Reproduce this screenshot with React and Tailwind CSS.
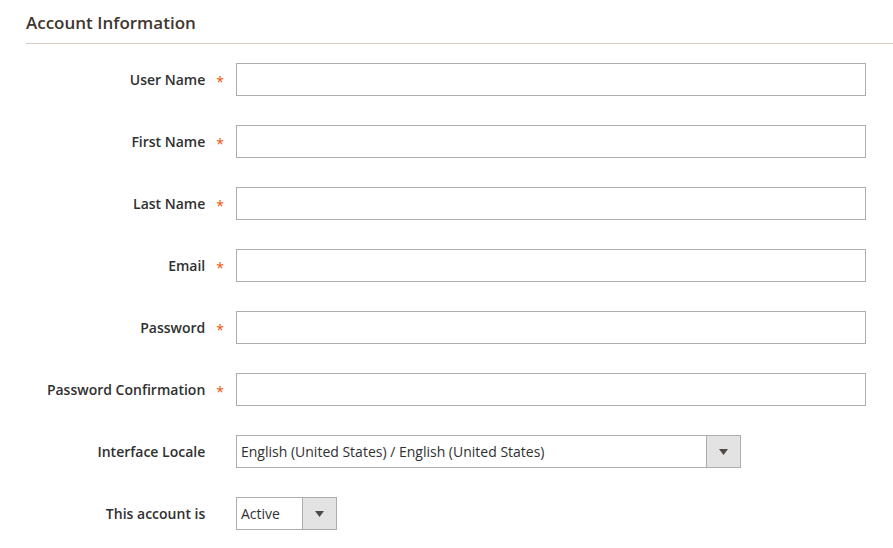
const fields = [
  "User Name",
  "First Name",
  "Last Name",
  "Email",
  "Password",
  "Password Confirmation",
];

const Label = ({ text, required }) => (
  <div className="w-[236px] shrink-0 flex items-center justify-end pr-[12px] text-[14px] font-semibold text-[#303030]">
    <span>{text}</span>
    <span
      className={`ml-[11px] font-normal text-[14px] mt-[3px] ${
        required ? "text-[#eb5202]" : "invisible"
      }`}
    >
      *
    </span>
  </div>
);

const Arrow = () => (
  <svg width="9" height="6" viewBox="0 0 9 6">
    <path d="M0 0 L9 0 L4.5 6 Z" fill="#514943" />
  </svg>
);

const SelectBox = ({ value, width }) => (
  <div
    className={`${width} h-[33px] border border-[#adadad] flex items-stretch bg-white`}
  >
    <div className="flex-1 flex items-center pl-[4px] text-[14px] text-[#303030]">
      {value}
    </div>
    <div className="w-[34px] bg-[#e3e3e3] border-l border-[#adadad] flex items-center justify-center">
      <Arrow />
    </div>
  </div>
);

export default function App() {
  return (
    <div
      className="w-[893px] h-[548px] bg-white overflow-hidden"
      style={{ fontFamily: '"Open Sans", "Liberation Sans", sans-serif' }}
    >
      <div className="ml-[26px] pt-[11px] pb-[9px] border-b border-[#d6cdbd]">
        <h2 className="text-[17px] leading-[23px] font-semibold text-[#41362f]">
          Account Information
        </h2>
      </div>

      <div className="pt-[19px] flex flex-col gap-[29px]">
        {fields.map((f) => (
          <div key={f} className="flex items-center">
            <Label text={f} required />
            <div className="w-[630px] h-[33px] border border-[#adadad] bg-white" />
          </div>
        ))}
        <div className="flex items-center">
          <Label text="Interface Locale" />
          <SelectBox
            value="English (United States) / English (United States)"
            width="w-[505px]"
          />
        </div>
        <div className="flex items-center">
          <Label text="This account is" />
          <SelectBox value="Active" width="w-[101px]" />
        </div>
      </div>
    </div>
  );
}
